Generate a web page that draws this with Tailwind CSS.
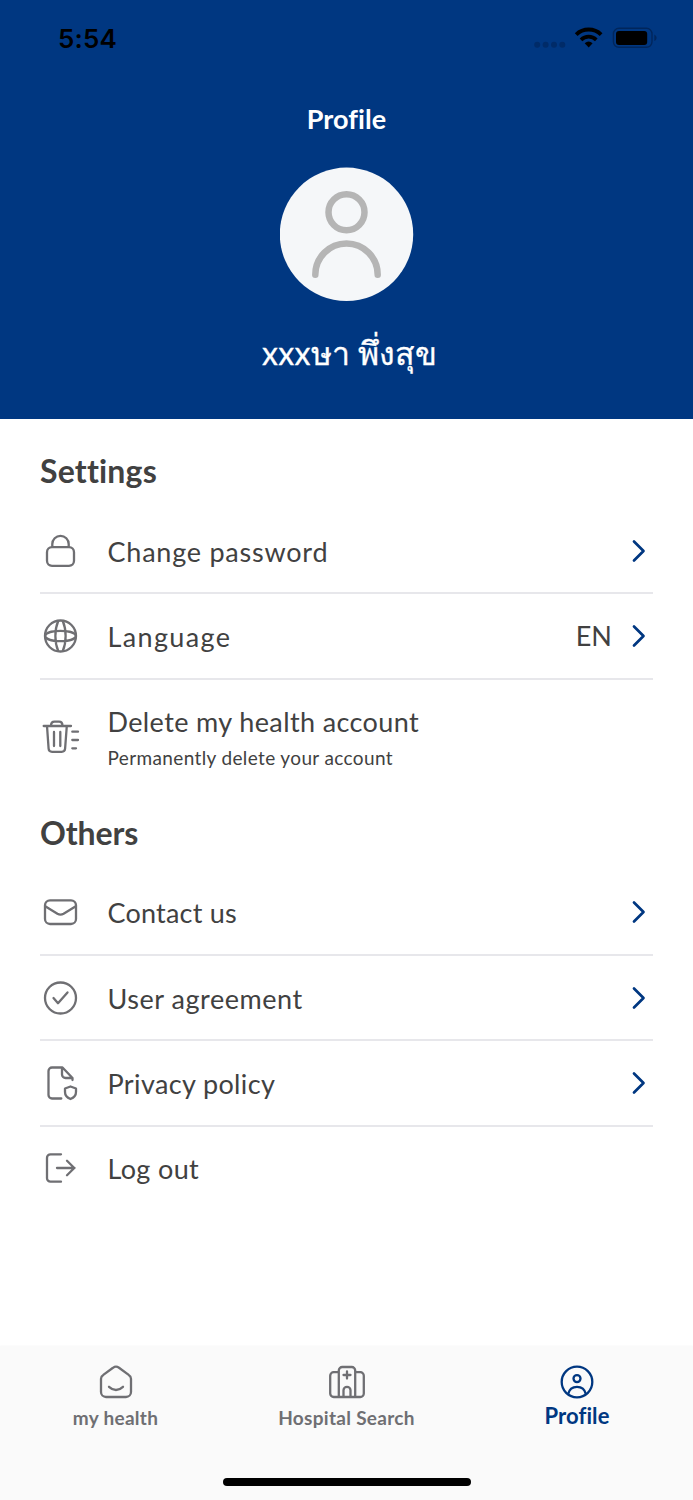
<!DOCTYPE html>
<html lang="en">
<head>
<meta charset="utf-8">
<title>Profile</title>
<script src="https://cdn.jsdelivr.net/npm/@tailwindcss/browser@4"></script>
</head>
<body class="w-[693px] h-[1500px] flex flex-col bg-white overflow-hidden font-['Lato','Noto_Sans',sans-serif] text-[#414141]">

<svg class="hidden"><symbol id="chevron" viewBox="0 0 18 26"><path d="M4 3.500 13.500 13l-9.500 9.500" fill="none" stroke="#003781" stroke-width="2.700" stroke-linecap="round" stroke-linejoin="round"/></symbol></svg>

<header class="h-[418.5px] shrink-0 bg-[#003781] flex flex-col items-center text-white">
  <div class="w-full h-[76px] flex items-center justify-between pl-[58px] pr-[36px] text-black">
    <span class="font-['Inter',sans-serif] font-semibold text-[26px] tracking-[0.2px] leading-none pt-[2px]">5:54</span>
    <svg class="w-[124px] h-[30px]" viewBox="533 23 124 30">
      <g fill="#002b68"><circle cx="537.2" cy="44.8" r="3"/><circle cx="545.6" cy="44.8" r="3"/><circle cx="554" cy="44.8" r="3"/><circle cx="562.3" cy="44.8" r="3"/></g>
      <g fill="none" stroke="#000" stroke-width="4"><path d="M576.2 34.6a18 18 0 0 1 24.900 0"/><path d="M581 39.8a11 11 0 0 1 15.300 0" stroke-width="3.7"/></g>
      <path d="M584.7 43.3a6 6 0 0 1 7.900 0l-3.900 4.200z"/>
      <rect x="613.4" y="28.3" width="38.6" height="19" rx="5.5" fill="none" stroke="#00265c" stroke-width="1.4"/>
      <rect x="616" y="30.9" width="31.2" height="14" rx="3"/>
      <path d="M654.3 34.4c3 1.5 3 5.200 0 6.700z" fill="#00265c"/>
    </svg>
  </div>
  <h1 class="mt-[23px] h-[40px] leading-[40px] text-[27px] font-bold tracking-[0.1px]">Profile</h1>
  <svg class="mt-[28px] w-[134px] h-[134px]" viewBox="0.5 0 134 134">
    <circle cx="67" cy="67.3" r="66.7" fill="#f5f7f9"/>
    <g fill="none" stroke="#b5b5b5" stroke-width="6.500" stroke-linecap="round"><circle cx="67" cy="45.300" r="18"/><path d="M35.800 107.700A31.200 31.200 0 0 1 98.200 107.700"/></g>
  </svg>
  <p class="mt-[27px] h-[50px] leading-[50px] text-[32px] whitespace-nowrap pl-[6px] [-webkit-text-stroke:0.3px_white]"><span class="tracking-[0.3px]">xxx</span>ษา พึ่งสุข</p>
</header>

<main class="flex-1 pl-[40px] pr-[40.500px]">
  <h2 class="h-[90px] pt-[32px] leading-[40px] text-[32px] font-bold tracking-[0.2px]">Settings</h2>
  <div class="h-[85.500px] pt-[1px] flex items-center border-b-2 border-[#e7e7eb]">
    <svg class="size-10 mr-[27.500px]" viewBox="0 0.5 40 40" fill="none" stroke="#6f6f73" stroke-width="2.300"><rect x="7" y="16.700" width="27" height="18.600" rx="5"/><path d="M12.300 16.700v-3.200a8.200 8.200 0 0 1 16.400 0v3.200"/></svg>
    <span class="text-[27px] pt-[2px] tracking-[0.770px]">Change password</span>
    <svg class="ml-auto mr-[4.500px] w-[18px] h-[26px]"><use href="#chevron"/></svg>
  </div>
  <div class="h-[85.500px] flex items-center border-b-2 border-[#e7e7eb]">
    <svg class="size-10 mr-[27.500px]" viewBox="0 0 40 40" fill="none" stroke="#6f6f73" stroke-width="2.300"><circle cx="20.500" cy="20" r="15.500"/><path d="M18.300 4.700c-3.900 9-3.900 21.600 0 30.600M22.700 4.700c3.900 9 3.900 21.600 0 30.600M5 20c1.500-6.800 29.500-6.800 31 0M5 20c1.500 6.800 29.500 6.800 31 0"/></svg>
    <span class="text-[27px] pt-[2px] tracking-[1.350px]">Language</span>
    <span class="ml-auto mr-[18px] text-[27px]">EN</span>
    <svg class="mr-[4.500px] w-[18px] h-[26px]"><use href="#chevron"/></svg>
  </div>
  <div class="h-[114px] flex items-center">
    <svg class="size-10 mr-[27.500px]" viewBox="0 0 40 40" fill="none" stroke="#6f6f73" stroke-width="2.300" stroke-linecap="round" stroke-linejoin="round"><path d="M3.700 9H31M11 9c0-3 1.500-4.300 3.500-4.300H19c2 0 3.500 1.300 3.500 4.300M7 9l1.600 22.500a3.500 3.500 0 0 0 3.500 3.300h9.500a3.500 3.500 0 0 0 3.500-3.300L26.800 9M14 15v14M20.300 15v14M32.300 14.700H38M32.300 23H38M32.300 31.300H36"/></svg>
    <div class="flex flex-col pt-[7px]">
      <span class="text-[27px] leading-[36px] tracking-[0.380px]">Delete my health account</span>
      <span class="text-[19px] leading-[36px] tracking-[0.370px]">Permanently delete your account</span>
    </div>
  </div>
  <h2 class="h-[76.500px] pt-[19px] leading-[40px] text-[32px] font-bold tracking-[-0.100px]">Others</h2>
  <div class="h-[85.500px] flex items-center border-b-2 border-[#e7e7eb]">
    <svg class="size-10 mr-[27.500px]" viewBox="0 0 40 40" fill="none" stroke="#6f6f73" stroke-width="2.300"><rect x="5" y="8.300" width="31" height="23.700" rx="5"/><path d="M5.200 14.200l12.200 7.600q3.100 1.700 6.200 0L35.800 14.200"/></svg>
    <span class="text-[27px] pt-[2px] tracking-[0.200px]">Contact us</span>
    <svg class="ml-auto mr-[4.500px] w-[18px] h-[26px]"><use href="#chevron"/></svg>
  </div>
  <div class="h-[85.500px] pt-[1px] flex items-center border-b-2 border-[#e7e7eb]">
    <svg class="size-10 mr-[27.500px]" viewBox="0 0 40 40" fill="none" stroke="#6f6f73" stroke-width="2.300" stroke-linecap="round" stroke-linejoin="round"><circle cx="20.500" cy="20" r="15.500"/><path d="M13.500 20l4.500 5.200 9.500-10.800"/></svg>
    <span class="text-[27px] pt-[2px] tracking-[0.540px]">User agreement</span>
    <svg class="ml-auto mr-[4.500px] w-[18px] h-[26px]"><use href="#chevron"/></svg>
  </div>
  <div class="h-[85.500px] flex items-center border-b-2 border-[#e7e7eb]">
    <svg class="size-10 mr-[27.500px]" viewBox="0 0 40 40" fill="none" stroke="#6f6f73" stroke-width="2.300" stroke-linecap="round" stroke-linejoin="round"><path d="M21.300 35.500H12a3.500 3.500 0 0 1-3.500-3.500V8A3.500 3.500 0 0 1 12 4.500h10.500l10 10.500v2M22 5v6.500a3.500 3.500 0 0 0 3.500 3.500h6.500"/><path d="M30.500 23.500l5.500 2v3.500c0 3.200-2.200 5.700-5.500 7-3.300-1.300-5.500-3.800-5.500-7v-3.500z"/></svg>
    <span class="text-[27px] pt-[2px] tracking-[0.380px]">Privacy policy</span>
    <svg class="ml-auto mr-[4.500px] w-[18px] h-[26px]"><use href="#chevron"/></svg>
  </div>
  <div class="h-[83.500px] flex items-center">
    <svg class="size-10 mr-[27.500px]" viewBox="0 0 40 40" fill="none" stroke="#6f6f73" stroke-width="2.300" stroke-linecap="round" stroke-linejoin="round"><path d="M21 6.300H10.500A3.500 3.500 0 0 0 7 9.800v20.400a3.500 3.500 0 0 0 3.500 3.500H21M17 20h17.500M27 12.800l7.300 7.200-7.300 7.200"/></svg>
    <span class="text-[27px] pt-[2px] tracking-[0.350px]">Log out</span>
  </div>
</main>

<nav class="h-[154px] shrink-0 bg-[#fafafa] shadow-[0_0_2px_rgba(0,0,0,0.04)] flex flex-col items-center text-[#6f6f73]">
  <div class="w-full h-[132px] grid grid-cols-3 pt-[16px]">
    <div class="flex flex-col items-center">
      <svg class="w-[40px] h-[40px]" viewBox="0 0 40 40" fill="none" stroke="currentColor" stroke-width="2.300" stroke-linecap="round" stroke-linejoin="round"><path d="M17 5.800 7.300 12.900A4.500 4.500 0 0 0 5 16.800V30a5 5 0 0 0 5 5h20a5 5 0 0 0 5-5V16.800a4.500 4.500 0 0 0-2.300-3.900L23 5.800a5 5 0 0 0-6 0z"/><path d="M13 24.800q7 6.500 14 0"/></svg>
      <span class="text-[19px] leading-[28px] font-bold mt-[2px] tracking-[0.300px]">my health</span>
    </div>
    <div class="flex flex-col items-center">
      <svg class="w-[40px] h-[40px]" viewBox="0 0 40 40" fill="none" stroke="currentColor" stroke-width="2.300" stroke-linecap="round" stroke-linejoin="round"><path d="M11.800 35V8.500A3.500 3.500 0 0 1 15.300 5h9.400a3.500 3.500 0 0 1 3.500 3.500V35M11.800 10.200H6.700a3.500 3.500 0 0 0-3.500 3.500v17.800A3.500 3.500 0 0 0 6.700 35h26.600a3.500 3.500 0 0 0 3.500-3.500V13.700a3.500 3.500 0 0 0-3.500-3.500h-5.100M20 9.500v7M16.500 13h7M16.500 35v-6.700a3.500 3.500 0 0 1 7 0V35"/></svg>
      <span class="text-[19px] leading-[28px] font-bold mt-[2px] whitespace-nowrap tracking-[0.300px]">Hospital Search</span>
    </div>
    <div class="flex flex-col items-center pr-px text-[#003781]">
      <svg class="w-[40px] h-[40px]" viewBox="0 0 40 40" fill="none" stroke="currentColor" stroke-width="2.300" stroke-linecap="round"><circle cx="20" cy="20" r="15.300"/><circle cx="20" cy="16.600" r="3.500"/><path d="M11.200 32c1-4.500 4.500-7.200 8.800-7.200s7.800 2.700 8.800 7.200"/></svg>
      <span class="text-[22px] leading-[28px] font-bold tracking-[0.100px]">Profile</span>
    </div>
  </div>
  <div class="w-[248px] h-[8px] rounded-full bg-black"></div>
</nav>
</body>
</html>
